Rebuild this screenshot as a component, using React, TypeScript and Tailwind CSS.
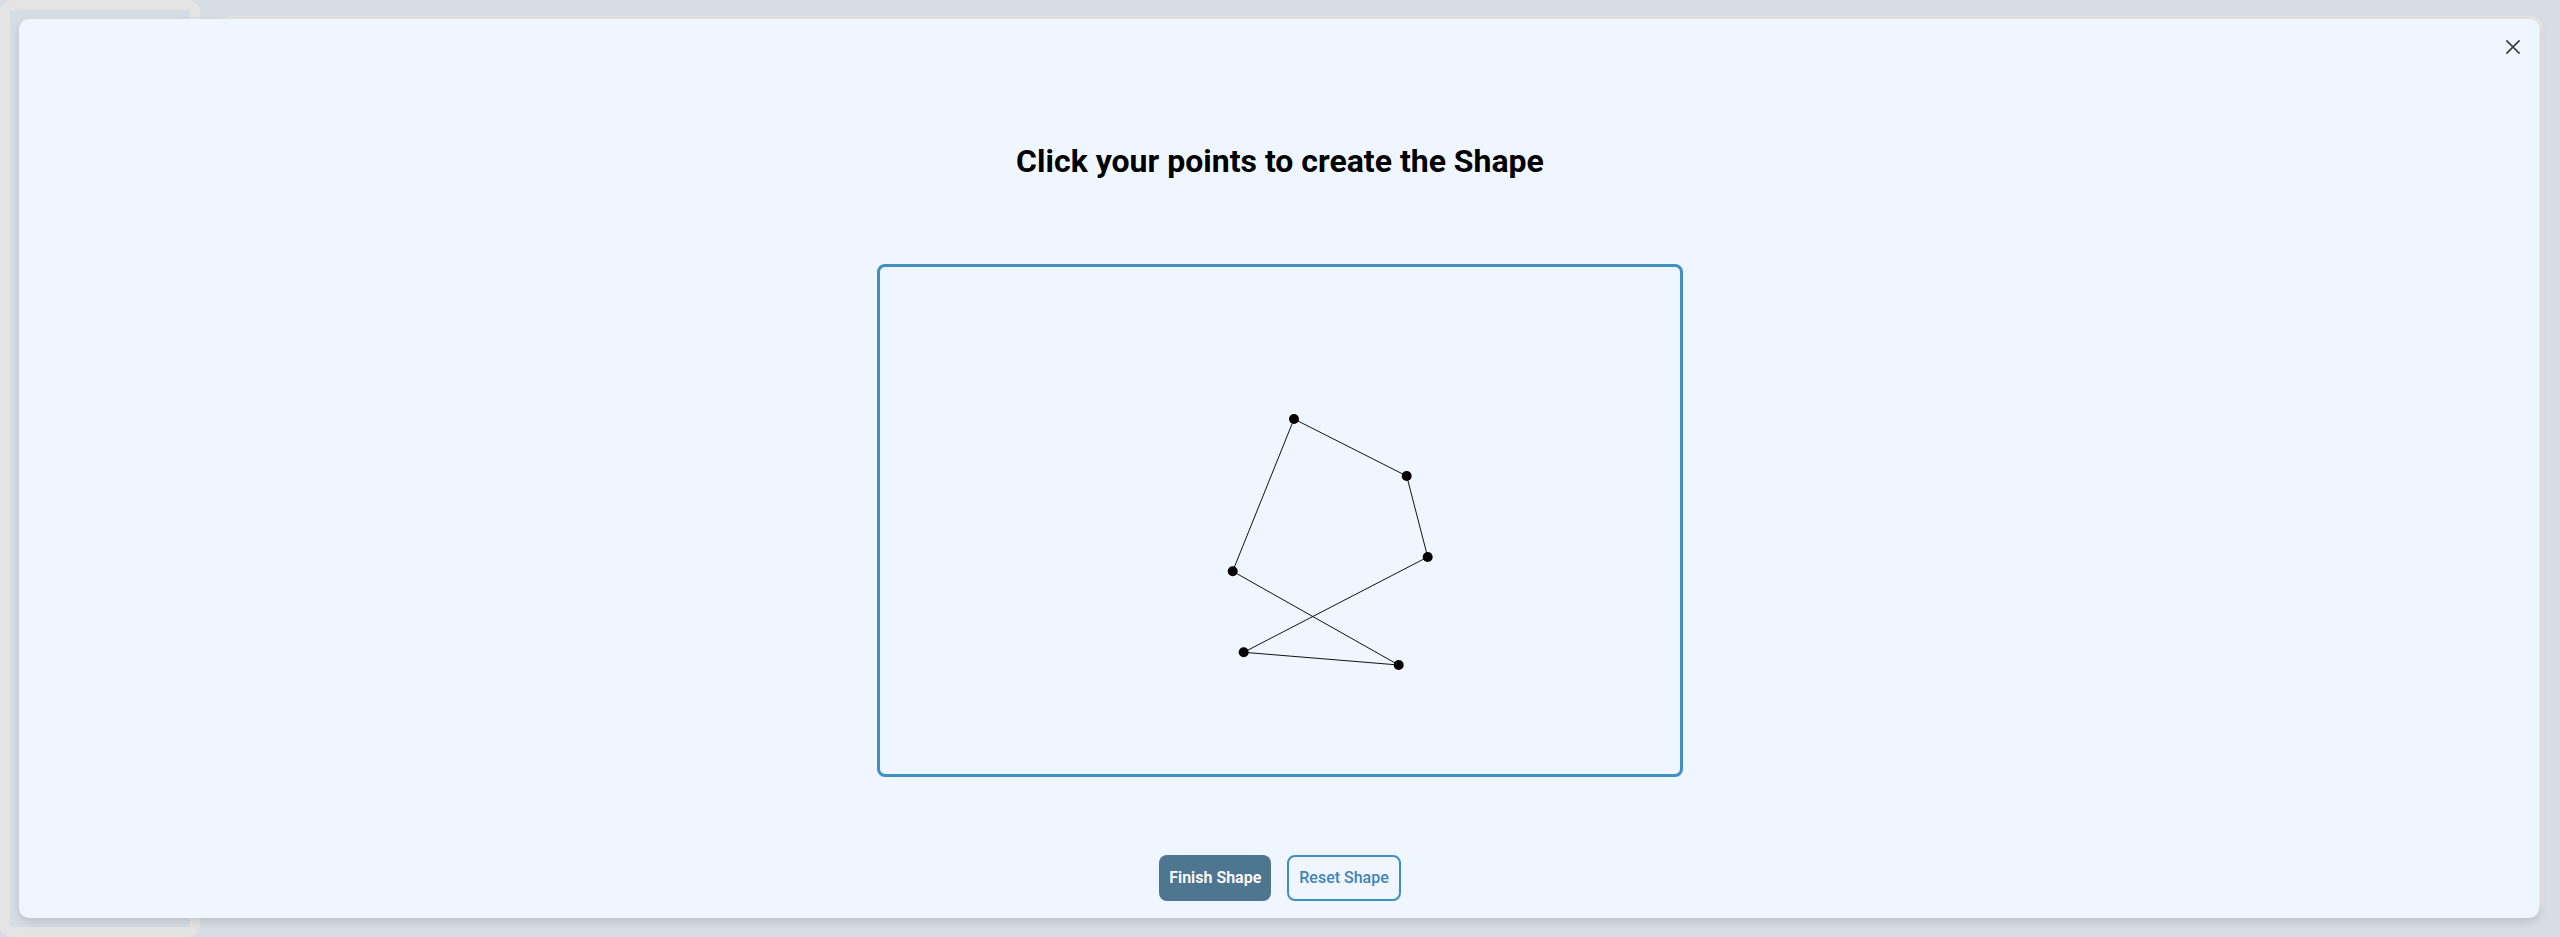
import React from "react";

const pts = {
  A: [352.7, 304.3],
  B: [414, 152],
  C: [526.7, 209],
  D: [547.7, 290],
  E: [363.7, 385.3],
  F: [518.7, 398],
};

const order: (keyof typeof pts)[] = ["A", "B", "C", "D", "E", "F", "A"];

export default function App() {
  const path = order.map((k, i) => `${i === 0 ? "M" : "L"}${pts[k][0]} ${pts[k][1]}`).join(" ");
  return (
    <div
      className="relative h-[937px] w-full overflow-hidden bg-[#d6dde5]"
      style={{ fontFamily: "Roboto, 'Noto Sans', sans-serif" }}
    >
      {/* background app */}
      <div className="flex h-full">
        <div className="h-[937px] w-[200px] shrink-0 rounded-[12px] border-[10px] border-[#e4e4e4] bg-[#d6dde5]" />
        <div className="ml-[18px] mr-[17px] mt-[16px] mb-[22px] flex-1 rounded-[12px] border-[3px] border-[#e4e4e4] bg-[#eff6ff]" />
      </div>

      {/* modal */}
      <div className="absolute left-[19px] top-[19px] right-[21px] bottom-[19px] rounded-[10px] bg-[#eff6ff] shadow-[0_4px_10px_rgba(0,0,0,0.12)]">
        <button className="absolute right-[19px] top-[21px] flex h-[14px] w-[14px] items-center justify-center">
          <svg width="14" height="14" viewBox="0 0 14 14">
            <path d="M1 1L13 13M13 1L1 13" stroke="#383838" strokeWidth="1.7" strokeLinecap="square" />
          </svg>
        </button>
        <div className="flex flex-col items-center pl-[2px] pt-[122px]">
          <h1 className="text-[32px] leading-[40px] font-bold text-black">Click your points to create the Shape</h1>
          <div className="mt-[83px] h-[513px] w-[806px] rounded-[8px] border-[3px] border-[#3f8fbf]">
            <svg width="800" height="507" viewBox="0 0 800 507">
              <path d={path} fill="none" stroke="#111" strokeWidth="1" />
              {Object.values(pts).map(([x, y], i) => (
                <circle key={i} cx={x} cy={y} r="5" fill="#000" />
              ))}
            </svg>
          </div>
          <div className="mt-[78px] flex gap-[16px]">
            <button className="h-[46px] rounded-[8px] bg-[#4f7691] px-[10px] text-[16px] font-semibold text-white">
              Finish Shape
            </button>
            <button className="h-[46px] rounded-[8px] border-2 border-[#3f8fbf] bg-[#eff6ff] px-[10px] text-[16px] font-medium text-[#3f85b6]">
              Reset Shape
            </button>
          </div>
        </div>
      </div>
    </div>
  );
}
